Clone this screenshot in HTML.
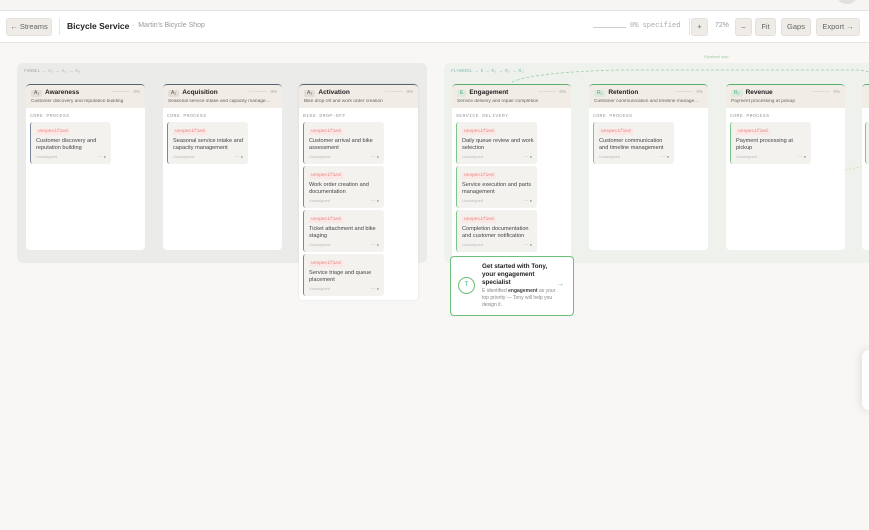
<!DOCTYPE html>
<html><head><meta charset="utf-8"><style>
*{box-sizing:border-box;margin:0;padding:0}
body{width:869px;height:530px;overflow:hidden;background:#f8f7f5;font-family:"Liberation Sans",sans-serif;position:relative;color:#222}
.abs{position:absolute}
.mono{font-family:"Liberation Mono",monospace}
.top{left:0;top:0;width:869px;height:11px;background:#f6f5f3;border-bottom:1px solid #e6e4e0}
.hdr{left:0;top:11px;width:869px;height:32px;background:#fff;border-bottom:1px solid #e6e4e0}
.btn{position:absolute;top:18px;height:18px;background:#efece7;border:1px solid #e4e1dc;border-radius:3px;font-size:7.5px;color:#666;line-height:16px;text-align:center}
.grp{border-radius:6px}
.col{position:absolute;top:84px;width:119px;background:#fff;border-radius:4px;overflow:hidden}
.ch{height:24px;background:#f1ede6;border-top:1.5px solid #5a6275;border-radius:4px 4px 0 0;padding:3px 5px 0;position:relative}
.fly .ch{border-top-color:#5cae6b}
.row{height:10px;line-height:10px;white-space:nowrap}
.badge{display:inline-block;background:#e2ded7;font-size:5px;line-height:7px;height:7px;padding:0 3px;color:#555;border-radius:2px;vertical-align:top;margin-top:1.5px}
.fly .badge{background:#dceadc;color:#4a8}
.ttl{font-size:6.5px;font-weight:bold;margin-left:3px;vertical-align:top}
.pct{position:absolute;right:5px;top:3px;font-size:4.5px;line-height:8px;color:#aaa}
.pct:before{content:"";display:inline-block;width:18px;border-top:1px solid #ddd;vertical-align:middle;margin-right:3px}
.sub{font-size:4.8px;line-height:6px;color:#666;white-space:nowrap;overflow:hidden;margin-top:1px}
.sec{font-size:4.8px;line-height:6px;color:#999;margin:6px 0 0 4px;letter-spacing:.4px}
.card{position:absolute;left:4px;width:81px;height:42px;background:#f4f2ee;border-left:1.5px solid #7b869d;border-radius:3px;padding:7px 5px;font-size:5px;line-height:6px}
.fly .card{border-left-color:#7fc58a}
.tag{display:inline-block;font-size:4.5px;line-height:6px;color:#e28080;background:#fbe7e4;padding:0 2px;font-family:"Liberation Mono",monospace;vertical-align:top}
.ct{font-size:5.6px;color:#444;line-height:7.3px;margin-top:3px;width:72px}
.un{position:absolute;left:5px;bottom:4px;font-size:4px;color:#bbb}
.dot{position:absolute;right:5px;bottom:4px;font-size:4px;color:#999}
</style></head><body>
<div class="abs top"></div>
<div class="abs hdr"></div>
<div class="abs" style="left:838px;top:-8px;width:18px;height:12px;border-radius:50%;background:#e2e0dc"></div>
<div class="btn" style="left:6px;width:46px">← Streams</div>
<div class="abs" style="left:59px;top:18px;height:17px;border-left:1px solid #e6e4e0"></div>
<div class="abs" style="left:67px;top:21px;font-size:8.5px;font-weight:bold;color:#222">Bicycle Service</div>
<div class="abs" style="left:132px;top:22px;font-size:7px;color:#999">·&nbsp; Martin's Bicycle Shop</div>
<div class="abs" style="left:593px;top:27px;width:33px;border-top:1px solid #ccc"></div>
<div class="abs mono" style="left:630px;top:22px;font-size:7px;color:#aaa">0% specified</div>
<div class="abs" style="left:689px;top:18px;height:17px;border-left:1px solid #e6e4e0"></div>
<div class="btn" style="left:691px;width:17px">+</div>
<div class="abs" style="left:715px;top:22px;font-size:7px;color:#999">72%</div>
<div class="btn" style="left:735px;width:17px">–</div>
<div class="btn" style="left:755px;width:21px">Fit</div>
<div class="btn" style="left:781px;width:30px">Gaps</div>
<div class="btn" style="left:816px;width:44px">Export →</div>

<div class="abs grp" style="left:17px;top:63px;width:410px;height:200px;background:#ebebea"></div>
<div class="abs mono" style="left:24px;top:69px;font-size:4.5px;color:#aaa">FUNNEL → A₁ → A₂ → A₃</div>
<div class="abs grp" style="left:444px;top:63px;width:440px;height:200px;background:#eef1ec"></div>
<div class="abs mono" style="left:451px;top:69px;font-size:4.5px;color:#8bb">FLYWHEEL → E → R₁ → R₂ → R₃</div>
<div class="abs" style="left:704px;top:54px;font-size:4px;color:#9c9">Flywheel loop</div>
<svg class="abs" style="left:440px;top:60px" width="429" height="130"><path d="M72 22 Q95 12 180 10 L420 10 L429 12" fill="none" stroke="#9fd0a6" stroke-width=".8" stroke-dasharray="3 2"/><path d="M405 110 L429 105" fill="none" stroke="#e0d9a0" stroke-width=".8" stroke-dasharray="2 2"/></svg>

<div class="col" style="left:26px;height:166px"><div class="ch"><div class="row"><span class="badge">A₁</span><span class="ttl">Awareness</span></div><span class="pct">0%</span><div class="sub">Customer discovery and reputation building</div></div><div class="sec mono">CORE PROCESS</div>
<div class="card" style="top:38px"><span class="tag">unspecified</span><div class="ct">Customer discovery and reputation building</div><span class="un">Unassigned</span><span class="dot">···· ●</span></div></div>
<div class="col" style="left:163px;height:166px"><div class="ch"><div class="row"><span class="badge">A₂</span><span class="ttl">Acquisition</span></div><span class="pct">0%</span><div class="sub">Seasonal service intake and capacity manage…</div></div><div class="sec mono">CORE PROCESS</div>
<div class="card" style="top:38px"><span class="tag">unspecified</span><div class="ct">Seasonal service intake and capacity management</div><span class="un">Unassigned</span><span class="dot">···· ●</span></div></div>
<div class="col" style="left:299px;height:216px;box-shadow:0 0 2px rgba(0,0,0,.1)"><div class="ch"><div class="row"><span class="badge">A₃</span><span class="ttl">Activation</span></div><span class="pct">0%</span><div class="sub">Bike drop-off and work order creation</div></div><div class="sec mono">BIKE DROP-OFF</div>
<div class="card" style="top:38px"><span class="tag">unspecified</span><div class="ct">Customer arrival and bike assessment</div><span class="un">Unassigned</span><span class="dot">···· ●</span></div>
<div class="card" style="top:82px"><span class="tag">unspecified</span><div class="ct">Work order creation and documentation</div><span class="un">Unassigned</span><span class="dot">···· ●</span></div>
<div class="card" style="top:126px"><span class="tag">unspecified</span><div class="ct">Ticket attachment and bike staging</div><span class="un">Unassigned</span><span class="dot">···· ●</span></div>
<div class="card" style="top:170px"><span class="tag">unspecified</span><div class="ct">Service triage and queue placement</div><span class="un">Unassigned</span><span class="dot">···· ●</span></div></div>

<div class="fly">
<div class="col" style="left:452px;height:174px"><div class="ch"><div class="row"><span class="badge">E</span><span class="ttl">Engagement</span></div><span class="pct">0%</span><div class="sub">Service delivery and repair completion</div></div><div class="sec mono">SERVICE DELIVERY</div>
<div class="card" style="top:38px"><span class="tag">unspecified</span><div class="ct">Daily queue review and work selection</div><span class="un">Unassigned</span><span class="dot">···· ●</span></div>
<div class="card" style="top:82px"><span class="tag">unspecified</span><div class="ct">Service execution and parts management</div><span class="un">Unassigned</span><span class="dot">···· ●</span></div>
<div class="card" style="top:126px"><span class="tag">unspecified</span><div class="ct">Completion documentation and customer notification</div><span class="un">Unassigned</span><span class="dot">···· ●</span></div></div>
<div class="col" style="left:589px;height:166px"><div class="ch"><div class="row"><span class="badge">R₁</span><span class="ttl">Retention</span></div><span class="pct">0%</span><div class="sub">Customer communication and timeline manage…</div></div><div class="sec mono">CORE PROCESS</div>
<div class="card" style="top:38px"><span class="tag">unspecified</span><div class="ct">Customer communication and timeline management</div><span class="un">Unassigned</span><span class="dot">···· ●</span></div></div>
<div class="col" style="left:726px;height:166px"><div class="ch"><div class="row"><span class="badge">R₂</span><span class="ttl">Revenue</span></div><span class="pct">0%</span><div class="sub">Payment processing at pickup</div></div><div class="sec mono">CORE PROCESS</div>
<div class="card" style="top:38px"><span class="tag">unspecified</span><div class="ct">Payment processing at pickup</div><span class="un">Unassigned</span><span class="dot">···· ●</span></div></div>
<div class="col" style="left:862px;height:166px"><div class="ch"></div><div class="card" style="top:38px;left:3px"></div></div>
</div>

<div class="abs" style="left:450px;top:256px;width:124px;height:60px;background:#fff;border:1.5px solid #6cc07a;border-radius:4px"></div>
<div class="abs" style="left:458px;top:277px;width:17px;height:17px;border:1.2px solid #6cc07a;border-radius:50%;font-size:6px;text-align:center;line-height:15px;color:#3a7">T</div>
<div class="abs" style="left:482px;top:263px;width:72px;font-size:6.3px;font-weight:bold;line-height:8px;color:#222">Get started with Tony, your engagement specialist</div>
<div class="abs" style="left:482px;top:288px;width:74px;font-size:5px;line-height:7.2px;color:#888">E identified <b style="color:#444">engagement</b> as your top priority — Tony will help you design it.</div>
<div class="abs" style="left:557px;top:281px;font-size:7px;color:#3a7">→</div>
<div class="abs" style="left:862px;top:350px;width:14px;height:60px;border-radius:8px;box-shadow:0 0 10px rgba(0,0,0,.15);background:#fff"></div>
</body></html>
